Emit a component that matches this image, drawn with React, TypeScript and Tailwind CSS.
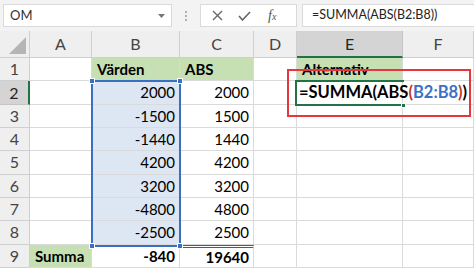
type Cell = { t?: string; b?: boolean; g?: boolean; sel?: boolean; dbl?: boolean; left?: boolean };

const cols = ['A', 'B', 'C', 'D', 'E', 'F'];

const vals = [
  ['2000', '2000'],
  ['-1500', '1500'],
  ['-1440', '1440'],
  ['4200', '4200'],
  ['3200', '3200'],
  ['-4800', '4800'],
  ['-2500', '2500'],
];

const rows: Cell[][] = [
  [{}, { t: 'Värden', b: true, g: true, left: true }, { t: 'ABS', b: true, g: true, left: true }, {}, { t: 'Alternativ', b: true, g: true, left: true }, {}],
  ...vals.map(([b, c]) => [{}, { t: b, sel: true }, { t: c }, {}, {}, {}] as Cell[]),
  [{ t: 'Summa', b: true, g: true, left: true }, { t: '-840', b: true }, { t: '19640', b: true, dbl: true }, {}, {}, {}],
];

function Toolbar() {
  return (
    <div className="h-[31px] bg-[#f3f3f3] flex items-start pt-[4px]">
      <div className="ml-[3px] w-[169px] h-[23px] bg-white border border-[#dadada] flex items-center justify-between pl-[6px] pr-[6px] text-[13px] text-[#333]">
        <span>OM</span>
        <svg width="7" height="4" viewBox="0 0 7 4"><path d="M0 0h7L3.5 4z" fill="#777" /></svg>
      </div>
      <div className="w-[28px] h-[23px] flex flex-col items-center justify-center gap-[2px]">
        <div className="w-[2px] h-[2px] bg-[#b0b0b0]" />
        <div className="w-[2px] h-[2px] bg-[#b0b0b0]" />
        <div className="w-[2px] h-[2px] bg-[#b0b0b0]" />
      </div>
      <div className="w-[97px] h-[23px] bg-white border border-[#dadada] flex items-center pl-[11px] gap-[15px] text-[#555]">
        <svg width="11" height="11" viewBox="0 0 11 11"><path d="M1 1l9 9M10 1l-9 9" stroke="#666" strokeWidth="1.4" /></svg>
        <svg width="13" height="10" viewBox="0 0 13 10"><path d="M1 5l3.5 4L12 1" stroke="#666" strokeWidth="1.6" fill="none" /></svg>
        <span className="font-['Liberation_Serif',serif] italic text-[14px] text-[#555] ml-[2px]">f<span className="text-[10px]">x</span></span>
      </div>
      <div className="ml-[5px] flex-1 h-[23px] bg-white border border-[#dadada] border-r-0 flex items-center pl-[9px] text-[12.5px] text-[#222]">
        =SUMMA(ABS(B2:B8))
      </div>
    </div>
  );
}

export default function App() {
  return (
    <div className="w-[474px] h-[271px] overflow-hidden bg-white font-[Lato,sans-serif] text-[15px] text-black">
      <Toolbar />
      <div className="relative grid grid-cols-[30px_62px_88px_74px_43px_106px_1fr] grid-rows-[27px_repeat(9,23.33px)]">
        <div className="bg-[#efefef] border-r border-b border-[#cfcfcf] flex items-end justify-end pr-[3px] pb-[3px]">
          <svg width="17" height="17" viewBox="0 0 17 17"><path d="M17 0V17H0z" fill="#b5b5b5" /></svg>
        </div>
        {cols.map((c) =>
          c === 'E' ? (
            <div key={c} className="bg-[#d4d4d4] border-r border-[#c4c4c4] border-b-2 border-b-[#217346] flex items-center justify-center text-[16px] text-[#262626]">{c}</div>
          ) : (
            <div key={c} className="bg-[#efefef] border-r border-b border-[#cfcfcf] flex items-center justify-center text-[16px] text-[#444]">{c}</div>
          )
        )}
        {rows.map((r, i) => (
          <>
            <div
              key={'h' + i}
              className={
                i === 1
                  ? 'bg-[#d4d4d4] border-r-2 border-r-[#217346] border-b border-[#c4c4c4] flex items-center justify-center text-[16px] text-[#262626]'
                  : 'bg-[#efefef] border-r border-b border-[#cfcfcf] flex items-center justify-center text-[16px] text-[#444]'
              }
            >
              {i + 1}
            </div>
            {r.map((c, j) => {
              const edit = i === 1 && j === 4;
              return (
                <div
                  key={i + '-' + j}
                  className={[
                    'border-r border-b border-[#dadada] flex items-center whitespace-nowrap overflow-visible',
                    c.left || edit ? 'justify-start pl-[5px]' : 'justify-end pr-[4px]',
                    c.b ? 'font-bold' : '',
                    c.g ? 'bg-[#c6e0b4]' : c.sel ? 'bg-[#dde6f3]' : 'bg-white',
                    c.dbl ? 'border-t-[3px] border-t-[#5a5a5a] border-double' : '',
                  ].join(' ')}
                >
                  {edit ? (
                    <span className="relative z-10 -ml-[3px] font-bold text-[16.5px]">=SUMMA(ABS<span className="text-[#c0392b]">(</span><span className="text-[#3d70c4]">B2:B8</span><span className="text-[#c0392b]">)</span>)<span className="inline-block w-[1px] h-[17px] bg-black align-middle ml-[2px]" /></span>
                  ) : (
                    c.t
                  )}
                </div>
              );
            })}
          </>
        ))}

        {/* selection B2:B8 */}
        <div className="absolute left-[91px] top-[49px] w-[90px] h-[167px] border-2 border-[#3a6fc2] pointer-events-none">
          <div className="absolute -left-[4px] -top-[4px] w-[6px] h-[6px] bg-[#3a6fc2] border border-white" />
          <div className="absolute -right-[4px] -top-[4px] w-[6px] h-[6px] bg-[#3a6fc2] border border-white" />
          <div className="absolute -left-[4px] -bottom-[4px] w-[6px] h-[6px] bg-[#3a6fc2] border border-white" />
          <div className="absolute -right-[4px] -bottom-[4px] w-[6px] h-[6px] bg-[#3a6fc2] border border-white" />
        </div>

        {/* active cell E2 */}
        <div className="absolute left-[295px] top-[49px] w-[109px] h-[26px] border-2 border-r-0 border-[#217346] pointer-events-none">
          <div className="absolute -right-[2px] -bottom-[4px] w-[5px] h-[5px] bg-[#217346] border border-white" />
        </div>

        {/* red highlight */}
        <div className="absolute left-[287px] top-[38px] w-[184px] h-[48px] border-2 border-[#e8363d] z-20 pointer-events-none" />
      </div>
    </div>
  );
}
